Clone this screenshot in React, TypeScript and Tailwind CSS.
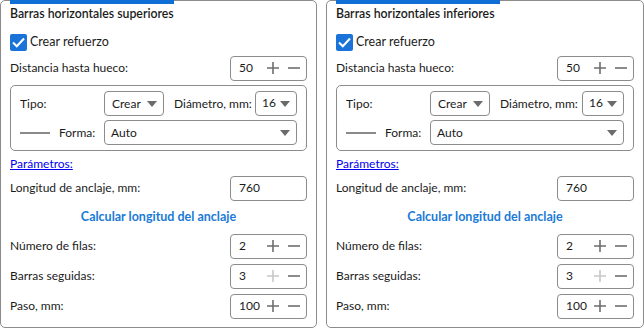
type Props = { title: string };

function Caret() {
  return (
    <svg width="10" height="6" viewBox="0 0 10 6" className="shrink-0">
      <path d="M0 0 H10 L5 6 Z" fill="#6b6b6b" />
    </svg>
  );
}

function Spinner({ value, plusOff }: { value: string; plusOff?: boolean }) {
  return (
    <div className="flex h-[25px] w-[77px] items-center rounded-[4px] border border-[#8c8c8c] bg-white pl-[8px]">
      <span className="flex-1">{value}</span>
      <svg width="12" height="12" viewBox="0 0 12 12" className="mr-[9px]">
        <path d="M6 0 V12 M0 6 H12" stroke={plusOff ? "#c8c8c8" : "#6e6e6e"} strokeWidth="1.6" />
      </svg>
      <svg width="12" height="12" viewBox="0 0 12 12" className="mr-[6px]">
        <path d="M0 6 H12" stroke="#6e6e6e" strokeWidth="1.6" />
      </svg>
    </div>
  );
}

function Row({ label, children }: { label: string; children: React.ReactNode }) {
  return (
    <div className="flex h-[30px] items-center justify-between">
      <span>{label}</span>
      {children}
    </div>
  );
}

function Panel({ title }: Props) {
  return (
    <div className="flex h-[328px] w-full flex-col rounded-[5px] border border-[#8c8c8c] bg-white px-[9px]">
      <div className="-mt-px h-[4px] w-[164px] bg-[#0f6fd6]" />
      <div className="mt-px h-[18px] text-[12.3px] font-semibold leading-[18px]">{title}</div>
      <div className="mt-[10px] flex h-[18px] items-center gap-[3px]">
        <span className="grid h-[17px] w-[17px] place-items-center rounded-[2px] bg-[#1a73d9]">
          <svg width="13" height="11" viewBox="0 0 13 11">
            <path d="M1 5.5 L4.8 9.3 L12 1.5" fill="none" stroke="white" strokeWidth="2" />
          </svg>
        </span>
        <span className="text-[12.5px]">Crear refuerzo</span>
      </div>
      <div className="mt-[2px]">
        <Row label="Distancia hasta hueco:">
          <Spinner value="50" />
        </Row>
      </div>
      <div className="mt-[2px] flex flex-col gap-[4px] rounded-[5px] border border-[#8c8c8c] px-[9px] py-[5px]">
        <div className="flex h-[25px] items-center">
          <span className="w-[84px]">Tipo:</span>
          <div className="flex h-[25px] w-[60px] items-center justify-between rounded-[4px] border border-[#8c8c8c] pl-[7px] pr-[6px]">
            <span>Crear</span>
            <Caret />
          </div>
          <span className="ml-[10px] flex-1 whitespace-nowrap">Diámetro, mm:</span>
          <div className="flex h-[25px] w-[42px] items-center justify-between rounded-[4px] border border-[#8c8c8c] pl-[6px] pr-[6px]">
            <span className="-mt-[2px]">16</span>
            <Caret />
          </div>
        </div>
        <div className="flex h-[25px] items-center">
          <span className="h-[2px] w-[30px] bg-[#8a8a8a]" />
          <span className="ml-[9px] w-[45px]">Forma:</span>
          <div className="flex h-[25px] flex-1 items-center justify-between rounded-[4px] border border-[#8c8c8c] pl-[6px] pr-[6px]">
            <span>Auto</span>
            <Caret />
          </div>
        </div>
      </div>
      <div className="mt-[4px] h-[18px] leading-[18px] text-[#0000ee] underline">Parámetros:</div>
      <Row label="Longitud de anclaje, mm:">
        <div className="flex h-[25px] w-[77px] items-center rounded-[4px] border border-[#8c8c8c] pl-[8px]">760</div>
      </Row>
      <div className="flex h-[28px] items-center justify-center text-[12.5px] font-bold text-[#1a7ad6]">
        Calcular longitud del anclaje
      </div>
      <Row label="Número de filas:">
        <Spinner value="2" />
      </Row>
      <Row label="Barras seguidas:">
        <Spinner value="3" plusOff />
      </Row>
      <Row label="Paso, mm:">
        <Spinner value="100" />
      </Row>
    </div>
  );
}

export default function App() {
  return (
    <div className="flex h-[329px] w-[644px] gap-[9px] bg-white font-['Lato',sans-serif] text-[12px] text-[#1b1b1b]">
      <div className="w-[317px]">
        <Panel title="Barras horizontales superiores" />
      </div>
      <div className="w-[318px]">
        <Panel title="Barras horizontales inferiores" />
      </div>
    </div>
  );
}
